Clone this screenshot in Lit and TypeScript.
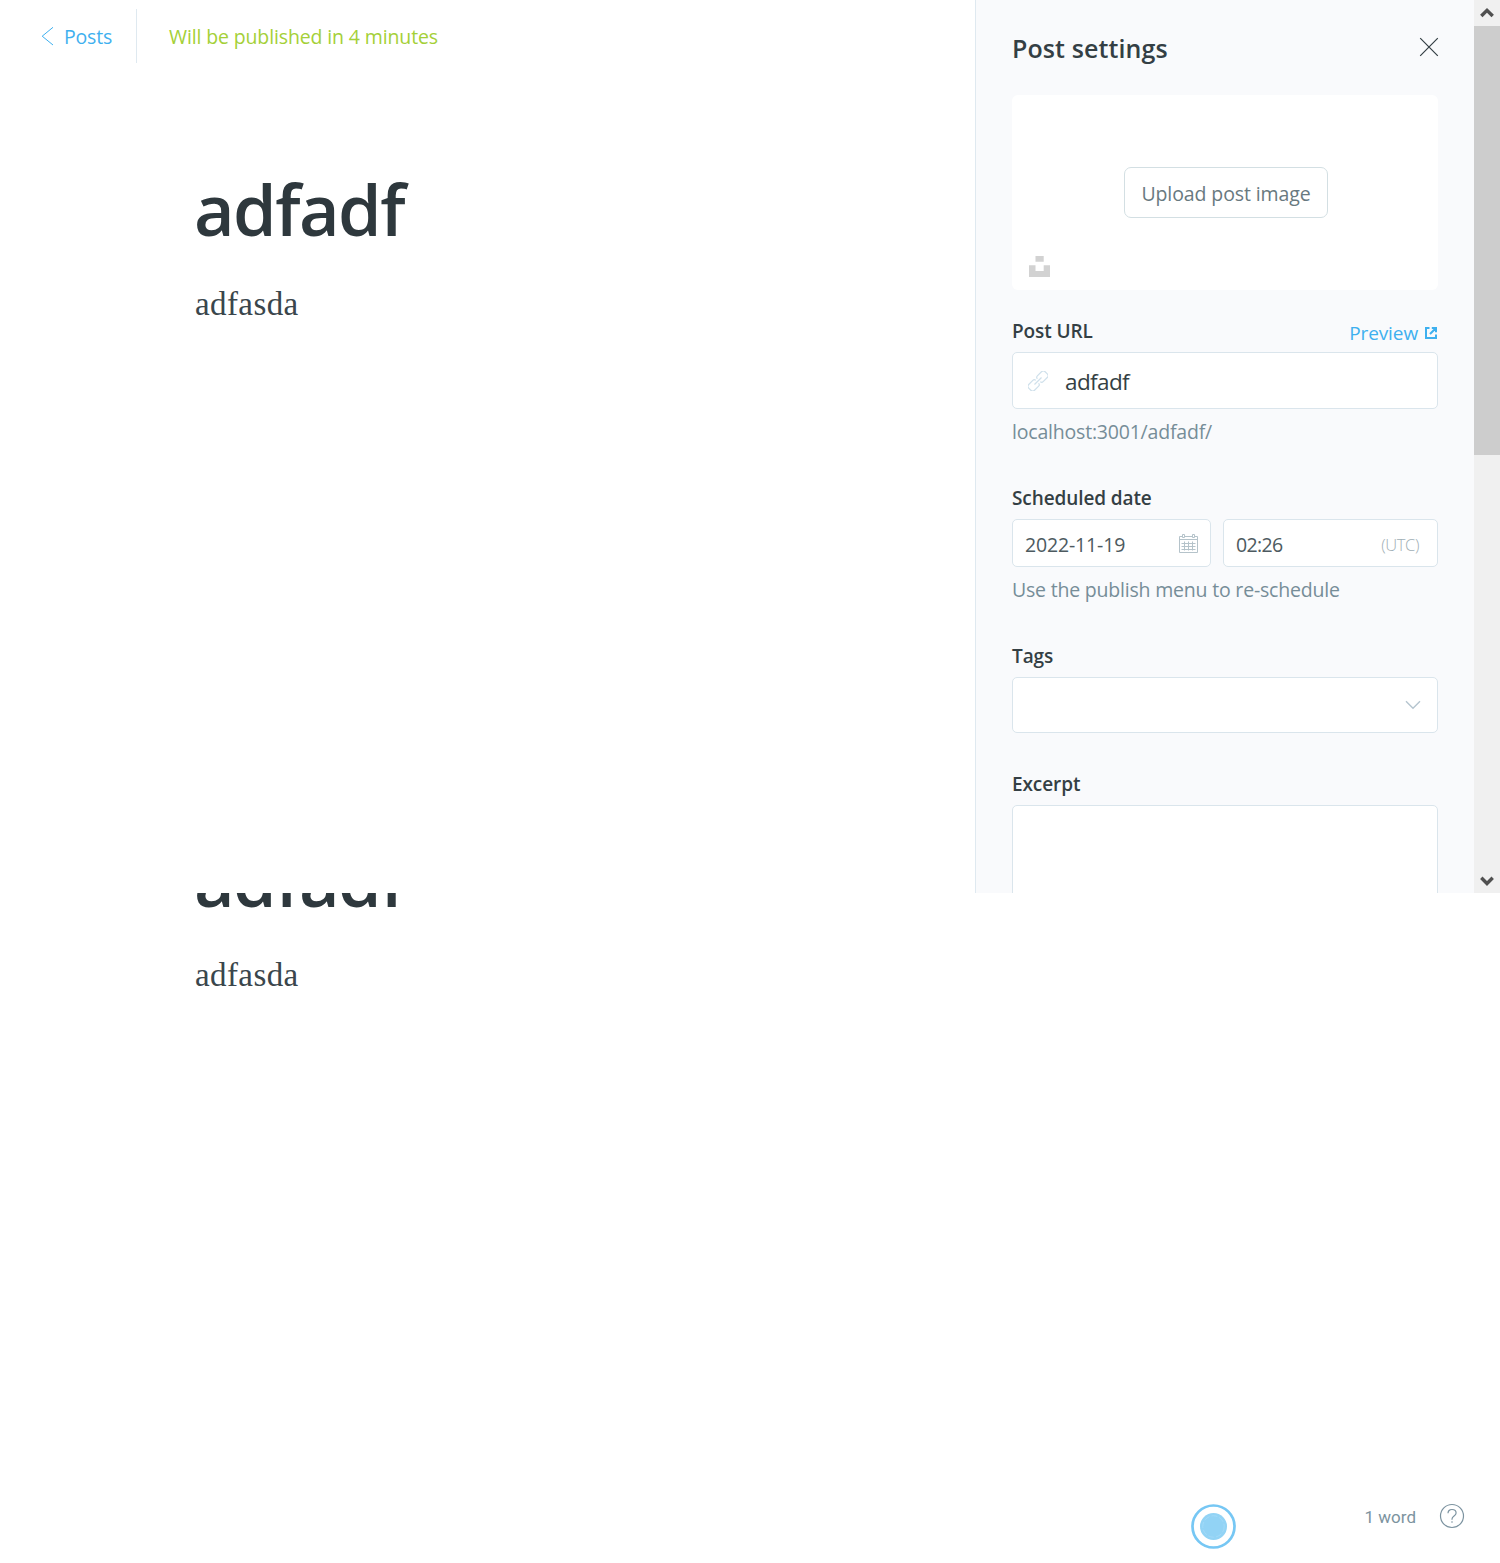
import { LitElement, html, css, svg } from "lit";
import { customElement, property } from "lit/decorators.js";

const icons = {
  back: svg`<path d="M12 1.3 1.2 10.2 12 19"/>`,
};

@customElement("post-canvas")
class PostCanvas extends LitElement {
  @property() heading = "";
  @property() body = "";

  static styles = css`
    :host { display: block; padding-left: 195px; }
    .title {
      margin: 0; height: 100px; white-space: nowrap; text-indent: -1px;
      font: 600 70px/100px "Open Sans", "Noto Sans", sans-serif;
      letter-spacing: -1.5px; color: #2e383d;
    }
    .text {
      margin: 25px 0 0; color: #3a464c; white-space: nowrap;
      font: 33px/40px "Liberation Serif", serif; letter-spacing: 0.4px;
    }
  `;

  render() {
    return html`<h1 class="title">${this.heading}</h1><p class="text">${this.body}</p>`;
  }
}

@customElement("scroll-track")
class ScrollTrack extends LitElement {
  static styles = css`
    :host { display: flex; flex-direction: column; width: 26px; background: #f0f0f0; }
    .arrow { display: block; width: 26px; height: 26px; fill: none; stroke: #505050; stroke-width: 3.4; }
    .thumb { height: 429px; background: #cdcdcd; }
    .rest { flex: 1; }
  `;

  render() {
    return html`
      <svg class="arrow" viewBox="0 0 26 26"><path d="M7.3 16 13 10.3 18.7 16" /></svg>
      <div class="thumb"></div>
      <div class="rest"></div>
      <svg class="arrow" viewBox="0 0 26 26"><path d="M7.3 10.8 13 16.5 18.7 10.8" /></svg>
    `;
  }
}

@customElement("settings-panel")
class SettingsPanel extends LitElement {
  static styles = css`
    :host {
      display: block; box-sizing: border-box; width: 499px; height: 893px; overflow: hidden;
      padding: 0 36px; background: #f9fafc; border-left: 1px solid #dfe9f0;
      font-family: "Open Sans", "Noto Sans", sans-serif; color: #343f44; white-space: nowrap;
    }
    svg { display: block; fill: none; flex: none; }
    .head { display: flex; justify-content: space-between; height: 95px; }
    .head h2 { margin: 30px 0 0; font-size: 25px; font-weight: 600; line-height: 36px; letter-spacing: 0.1px; }
    .head svg { margin: 37px -1px 0 0; stroke: #343f44; stroke-width: 1.2; }
    .image {
      display: flex; flex-direction: column; align-items: center; box-sizing: border-box;
      height: 195px; padding-top: 72px; background: #fff; border-radius: 6px;
    }
    .upload {
      box-sizing: border-box; width: 204px; height: 51px; margin: 0 0 0 2px; padding: 0;
      border: 1px solid #d3dfe3; border-radius: 7px; background: #fff; color: #68797f;
      font: 19.5px/52px "Open Sans", "Noto Sans", sans-serif; letter-spacing: -0.1px;
      text-align: center;
    }
    .unsplash { align-self: flex-start; margin: 38px 0 0 17px; fill: #d2d2d2; }
    .label { display: flex; justify-content: space-between; font-size: 19px; font-weight: 600; line-height: 30px; height: 36px; letter-spacing: -0.1px; }
    .url { margin-top: 26px; }
    .preview { display: flex; gap: 7px; padding-top: 2px; font-weight: 400; color: #3eb0ef; letter-spacing: -0.1px; }
    .preview svg { margin-top: 9px; margin-right: 1px; stroke: #3eb0ef; stroke-width: 2; }
    .box {
      display: flex; align-items: center; box-sizing: border-box; background: #fff;
      border: 1px solid #dae5ec; border-radius: 5px;
    }
    .slug { height: 57px; padding: 1px 15px 0; gap: 17px; font-size: 22.5px; letter-spacing: -0.6px; }
    .slug svg { margin-top: -1px; stroke: #cfe0eb; stroke-width: 1.2; }
    .hint { font-size: 19.5px; line-height: 30px; color: #768d98; letter-spacing: -0.2px; }
    .hint.address { margin: 8px 0 0; }
    .hint.note { margin: 8px 0 0; }
    .date { margin-top: 36px; }
    .row { display: flex; gap: 12px; }
    .row .box { height: 48px; justify-content: space-between; font-size: 19.5px; color: #4d5a60; letter-spacing: -0.25px; }
    .row .day { width: 199px; padding: 2px 12px 0; letter-spacing: -0.15px; }
    .day svg { margin-top: -1px; stroke: #b5c3ca; stroke-width: 1; }
    .row .time { flex: 1; padding: 2px 18px 0 12px; letter-spacing: -0.65px; }
    .zone { font-size: 16.5px; font-weight: 300; color: #9fafb6; letter-spacing: -0.4px; }
    .tags { margin-top: 36px; }
    .select { height: 56px; justify-content: flex-end; padding-right: 16px; }
    .select svg { stroke: #b5c5cf; stroke-width: 1.4; }
    .excerpt { margin-top: 36px; }
    .area { height: 140px; }
  `;

  render() {
    return html`
      <div class="head">
        <h2>Post settings</h2>
        <svg width="20" height="20" viewBox="0 0 20 20"><path d="M1.2 1.2 18.8 18.8M18.8 1.2 1.2 18.8" /></svg>
      </div>
      <div class="image">
        <button class="upload">Upload post image</button>
        <svg class="unsplash" width="21" height="21" viewBox="0 0 21 21">
          <path d="M6.5 0h8.2v5.8H6.5zM0 9.3h6.5v5.8h8.2V9.3H21V21H0z" />
        </svg>
      </div>
      <div class="label url">
        <span>Post URL</span>
        <span class="preview">Preview
          <svg width="12" height="12" viewBox="0 0 12 12">
            <path d="M4.5 1H1v10h10V7.5M5 7 10 2M6.8 1H11v4.2" />
          </svg>
        </span>
      </div>
      <div class="box slug">
        <svg width="20" height="20" viewBox="0 0 20 20">
          <g transform="rotate(-45 10 10)">
            <path d="M8.8 8V7.8A2 2 0 0 0 6.8 5.9H1A2.6 2.6 0 0 0-1.6 8.5v3A2.6 2.6 0 0 0 1 14.1h5.8a2 2 0 0 0 2-1.9V12M11.2 8v-.2a2 2 0 0 1 2-1.9H19a2.6 2.6 0 0 1 2.6 2.6v3a2.6 2.6 0 0 1-2.6 2.6h-5.8a2 2 0 0 1-2-1.9V12M5 10h10" />
          </g>
        </svg>
        <span>adfadf</span>
      </div>
      <p class="hint address">localhost:3001/adfadf/</p>
      <div class="label date">Scheduled date</div>
      <div class="row">
        <div class="box day">
          <span>2022-11-19</span>
          <svg width="19" height="19" viewBox="0 0 19 19">
            <path d="M3.5 2.5h-3v16h18v-16h-3M5.5 2.5h8M.5 5.5h18M2.5 9.5h14M2.5 12.5h14M2.5 15.5h14M5.5 7.5v9M9.5 7.5v9M13.5 7.5v9M3.5.5h2v3h-2zM13.5.5h2v3h-2z" />
          </svg>
        </div>
        <div class="box time"><span>02:26</span><span class="zone">(UTC)</span></div>
      </div>
      <p class="hint note">Use the publish menu to re-schedule</p>
      <div class="label tags">Tags</div>
      <div class="box select">
        <svg width="16" height="10" viewBox="0 0 16 10"><path d="M1 1.3 8 8.3 15 1.3" /></svg>
      </div>
      <div class="label excerpt">Excerpt</div>
      <div class="box area"></div>
    `;
  }
}

@customElement("app-root")
class AppRoot extends LitElement {
  static styles = css`
    :host {
      display: block; width: 1500px; height: 1563px; overflow: hidden; background: #fff;
      font-family: "Open Sans", "Noto Sans", sans-serif; white-space: nowrap;
    }
    svg { display: block; fill: none; flex: none; }
    .screen { display: flex; height: 893px; }
    .editor { flex: 1; }
    .bar { display: flex; align-items: center; height: 54px; padding: 9px 0 0 41px; font-size: 19.5px; }
    .back { stroke: #3eb0ef; stroke-width: 1; margin-right: 11px; }
    .posts { width: 72px; color: #3eb0ef; letter-spacing: -0.2px; }
    .divider { width: 1px; height: 54px; margin-right: 32px; background: #dfe9f0; }
    .status { color: #a4d037; letter-spacing: -0.13px; }
    .first { margin-top: 96px; }
    .below { display: flex; flex-direction: column; height: 670px; overflow: hidden; }
    .second { margin-top: -63px; flex: 1; }
    .foot { display: flex; justify-content: flex-end; height: 60px; padding-right: 35px; color: #7c93a0; }
    .dot { margin: 1px 128px 0 0; }
    .words { font: 17px/28px Roboto, sans-serif; }
    .help { margin: 0 0 0 23px; }
  `;

  render() {
    return html`
      <div class="screen">
        <div class="editor">
          <div class="bar">
            <svg class="back" width="12" height="20" viewBox="0 0 12 20">${icons.back}</svg>
            <span class="posts">Posts</span>
            <span class="divider"></span>
            <span class="status">Will be published in 4 minutes</span>
          </div>
          <post-canvas class="first" heading="adfadf" body="adfasda"></post-canvas>
        </div>
        <settings-panel></settings-panel>
        <scroll-track></scroll-track>
      </div>
      <div class="below">
        <post-canvas class="second" heading="adfadf" body="adfasda"></post-canvas>
        <div class="foot">
          <svg class="dot" width="46" height="46" viewBox="0 0 46 46">
            <circle cx="22.5" cy="22.5" r="21" stroke="#76c7f4" stroke-width="2.7" />
            <circle cx="22.5" cy="22.5" r="13.5" fill="#92d3f5" />
            <circle cx="22.5" cy="22.5" r="10.7" stroke="#a6dbf7" stroke-width=".8" stroke-dasharray="6 2" />
          </svg>
          <span class="words">1 word</span>
          <svg class="help" width="26" height="26" viewBox="0 0 26 26" stroke="#7c93a0" stroke-width="1.2">
            <circle cx="13" cy="13" r="11.5" />
            <path d="M9 10.2c0-2.3 1.7-3.7 4-3.7s4.1 1.4 4.1 3.6c0 3-4.1 3-4.1 6v.6M13 18.2v1.5" />
          </svg>
        </div>
      </div>
    `;
  }
}
